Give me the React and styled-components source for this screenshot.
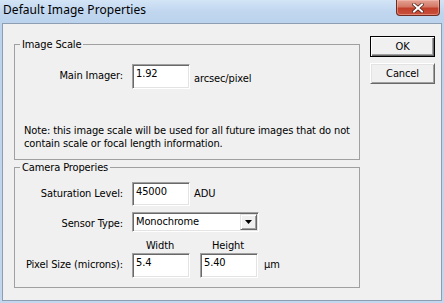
import React from "react";
import styled, { createGlobalStyle } from "styled-components";

const Global = createGlobalStyle`
  html, body { margin: 0; padding: 0; }
  body {
    background: #c2d7ee;
    font-family: "DejaVu Sans Condensed", "Liberation Sans", Arial, sans-serif;
    font-stretch: condensed;
    font-size: 11px;
    letter-spacing: -0.12px;
    color: #000;
  }
`;

const Window = styled.div`
  width: 444px;
  height: 303px;
  box-sizing: border-box;
  display: flex;
  flex-direction: column;
  padding: 0 2px 2px 2px;
  background: linear-gradient(to bottom, #d3e4f6 0px, #c0d6ef 12px, #bcd3ed 23px, #c2d7ee 100%);
`;

const TitleBar = styled.div`
  height: 23px;
  flex: none;
  display: flex;
  align-items: flex-start;
  justify-content: space-between;
`;

const Title = styled.div`
  font-family: "Noto Sans", "Open Sans", sans-serif;
  font-stretch: normal;
  font-size: 12px;
  line-height: 16px;
  margin: 2px 0 0 1px;
  color: #000;
  letter-spacing: 0.05px;
`;

const CloseButton = styled.div`
  width: 44px;
  height: 16px;
  margin-right: 2px;
  box-sizing: border-box;
  border: 1px solid #6e2b20;
  border-top: none;
  border-radius: 0 0 4px 4px;
  background: linear-gradient(to bottom, #e3a394 0%, #d47866 45%, #c2402b 55%, #c9513c 100%);
  box-shadow: inset 0 0 0 1px rgba(255, 200, 190, 0.45);
  display: flex;
  align-items: center;
  justify-content: center;
`;

const Client = styled.div`
  flex: 1;
  display: flex;
  align-items: flex-start;
  border: 1px solid #8d9db2;
  background: #f0f0f0;
`;

const Groups = styled.div`
  width: 346px;
  margin-left: 11px;
  margin-top: 14px;
  display: flex;
  flex-direction: column;
`;

const Group = styled.fieldset`
  margin: ${(p) => p.$mt || 0}px 0 0 0;
  padding: 0 0 ${(p) => p.$pb}px 0;
  border: 1px solid #a0a0a0;
  min-width: 0;
  box-sizing: border-box;
`;

const Legend = styled.legend`
  line-height: 13px;
  padding: 0 2px;
  margin-left: 5px;
`;

const Row = styled.div`
  display: flex;
  align-items: flex-start;
  margin-top: ${(p) => p.$mt}px;
`;

const Label = styled.div`
  width: 108px;
  flex: none;
  text-align: right;
  margin-right: 9px;
  margin-top: ${(p) => p.$dy || 0}px;
  line-height: 13px;
  white-space: nowrap;
`;

const Edit = styled.div`
  width: 58px;
  height: ${(p) => p.$h || 25}px;
  flex: none;
  box-sizing: border-box;
  background: #fff;
  border-style: solid;
  border-width: 1px;
  border-color: #a0a0a0 #fff #fff #a0a0a0;
  box-shadow: inset 1px 1px 0 #696969, inset -1px -1px 0 #e3e3e3;
  padding: 2px 3px 0 3px;
  line-height: 13px;
  margin-left: ${(p) => p.$ml || 0}px;
`;

const Unit = styled.div`
  margin-left: ${(p) => p.$ml || 4}px;
  margin-top: ${(p) => p.$dy || 0}px;
  line-height: 13px;
`;

const Note = styled.div`
  margin-top: 35px;
  padding-left: 9px;
  line-height: 13px;
`;

const Select = styled.div`
  width: 127px;
  height: 20px;
  box-sizing: border-box;
  background: #fff;
  border-style: solid;
  border-width: 1px;
  border-color: #a0a0a0 #fff #fff #a0a0a0;
  box-shadow: inset 1px 1px 0 #696969, inset -1px -1px 0 #e3e3e3;
  padding: 1px 1px 1px 3px;
  display: flex;
  align-items: flex-start;
  justify-content: space-between;
`;

const SelectText = styled.span`
  line-height: 13px;
  margin-top: 1px;
`;

const DropButton = styled.div`
  width: 17px;
  height: 16px;
  box-sizing: border-box;
  background: #f0f0f0;
  border-style: solid;
  border-width: 1px;
  border-color: #e3e3e3 #696969 #696969 #e3e3e3;
  box-shadow: inset 1px 1px 0 #fff, inset -1px -1px 0 #a0a0a0;
  display: flex;
  align-items: center;
  justify-content: center;
`;

const Header = styled.div`
  display: flex;
  margin-top: 7px;
  padding-left: 116px;
  line-height: 13px;
`;

const HeaderCell = styled.div`
  width: 58px;
  text-align: center;
  margin-left: ${(p) => p.$ml || 0}px;
`;

const Buttons = styled.div`
  display: flex;
  flex-direction: column;
  gap: 6px;
  margin-left: 10px;
  margin-top: 12px;
`;

const Button = styled.div`
  width: 65px;
  height: 21px;
  box-sizing: border-box;
  background: #f0f0f0;
  display: flex;
  align-items: center;
  justify-content: center;
  line-height: 13px;
  border-style: solid;
  border-width: 1px;
  border-color: ${(p) => (p.$default ? "#000" : "#fff #696969 #696969 #fff")};
  box-shadow: ${(p) =>
    p.$default
      ? "inset 1px 1px 0 #fff, inset -1px -1px 0 #696969, inset -2px -2px 0 #a0a0a0"
      : "inset 1px 1px 0 #e3e3e3, inset -1px -1px 0 #a0a0a0"};
`;

export default function App() {
  return (
    <>
      <Global />
      <Window>
        <TitleBar>
          <Title>Default Image Properties</Title>
          <CloseButton>
            <svg width="12" height="10" viewBox="0 0 12 10">
              <path d="M2 1.5 L10 8.5 M10 1.5 L2 8.5" stroke="#4a1a12" strokeWidth="3.4" strokeLinecap="square" />
              <path d="M2 1.5 L10 8.5 M10 1.5 L2 8.5" stroke="#fff" strokeWidth="2" strokeLinecap="square" />
            </svg>
          </CloseButton>
        </TitleBar>
        <Client>
          <Groups>
            <Group $pb={9}>
              <Legend>Image Scale</Legend>
              <Row $mt={13}>
                <Label $dy={5}>Main Imager:</Label>
                <Edit>1.92</Edit>
                <Unit $dy={8}>arcsec/pixel</Unit>
              </Row>
              <Note>
                Note: this image scale will be used for all future images that do not
                <br />
                contain scale or focal length information.
              </Note>
            </Group>
            <Group $mt={1} $pb={9}>
              <Legend>Camera Properies</Legend>
              <Row $mt={8}>
                <Label $dy={5}>Saturation Level:</Label>
                <Edit $h={24}>45000</Edit>
                <Unit $dy={5}>ADU</Unit>
              </Row>
              <Row $mt={6}>
                <Label $dy={5}>Sensor Type:</Label>
                <Select>
                  <SelectText>Monochrome</SelectText>
                  <DropButton>
                    <svg width="7" height="4" viewBox="0 0 7 4">
                      <path d="M0 0 H7 L3.5 4 Z" fill="#000" />
                    </svg>
                  </DropButton>
                </Select>
              </Row>
              <Header>
                <HeaderCell>Width</HeaderCell>
                <HeaderCell $ml={10}>Height</HeaderCell>
              </Header>
              <Row $mt={1}>
                <Label $dy={5}>Pixel Size (microns):</Label>
                <Edit>5.4</Edit>
                <Edit $ml={10}>5.40</Edit>
                <Unit $ml={6} $dy={5}>µm</Unit>
              </Row>
            </Group>
          </Groups>
          <Buttons>
            <Button $default>OK</Button>
            <Button>Cancel</Button>
          </Buttons>
        </Client>
      </Window>
    </>
  );
}
